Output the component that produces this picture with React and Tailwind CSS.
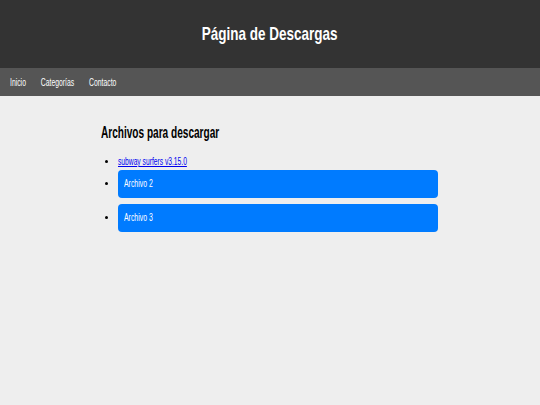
const navLinks = ['Inicio', 'Categorías', 'Contacto']

const files = [
  { name: 'subway surfers v3.15.0', link: true },
  { name: 'Archivo 2' },
  { name: 'Archivo 3' },
]

export default function App() {
  return (
    <div className="min-h-screen bg-[#eeeeee] font-['Liberation_Sans',Arial,sans-serif]">
      <header className="flex h-[68px] items-center justify-center bg-[#333333]">
        <h1 className="text-[19px] font-bold leading-[22px] text-white">
          <span className="inline-block origin-center scale-x-[0.71]">Página de Descargas</span>
        </h1>
      </header>

      <nav className="flex h-[28px] items-center bg-[#555555] pl-[10px]">
        <div className="inline-flex origin-left scale-x-[0.62] gap-[24px] text-[11px] text-white">
          {navLinks.map((l) => (
            <a key={l} href="#" className="no-underline">
              {l}
            </a>
          ))}
        </div>
      </nav>

      <main className="mx-auto w-[338px] pt-[28px]">
        <h2 className="text-[16px] font-bold leading-[18px] text-black">
          <span className="inline-block origin-left scale-x-[0.63]">Archivos para descargar</span>
        </h2>

        <ul className="mt-[12px] list-disc pl-[17px] pr-[1px] text-[10px]">
          {files.map((f, i) =>
            f.link ? (
              <li key={f.name} className="leading-[16px]">
                <a href="#" className="inline-block origin-left scale-x-[0.67] text-[#0000ee] underline">
                  {f.name}
                </a>
              </li>
            ) : (
              <li key={f.name} className={i > 1 ? 'mt-[6px]' : ''}>
                <a
                  href="#"
                  className="inline-block w-full rounded-[4px] bg-[#007bff] py-[8px] pl-[6px] leading-[12px] text-white"
                >
                  <span className="inline-block origin-left scale-x-[0.69]">{f.name}</span>
                </a>
              </li>
            )
          )}
        </ul>
      </main>
    </div>
  )
}
